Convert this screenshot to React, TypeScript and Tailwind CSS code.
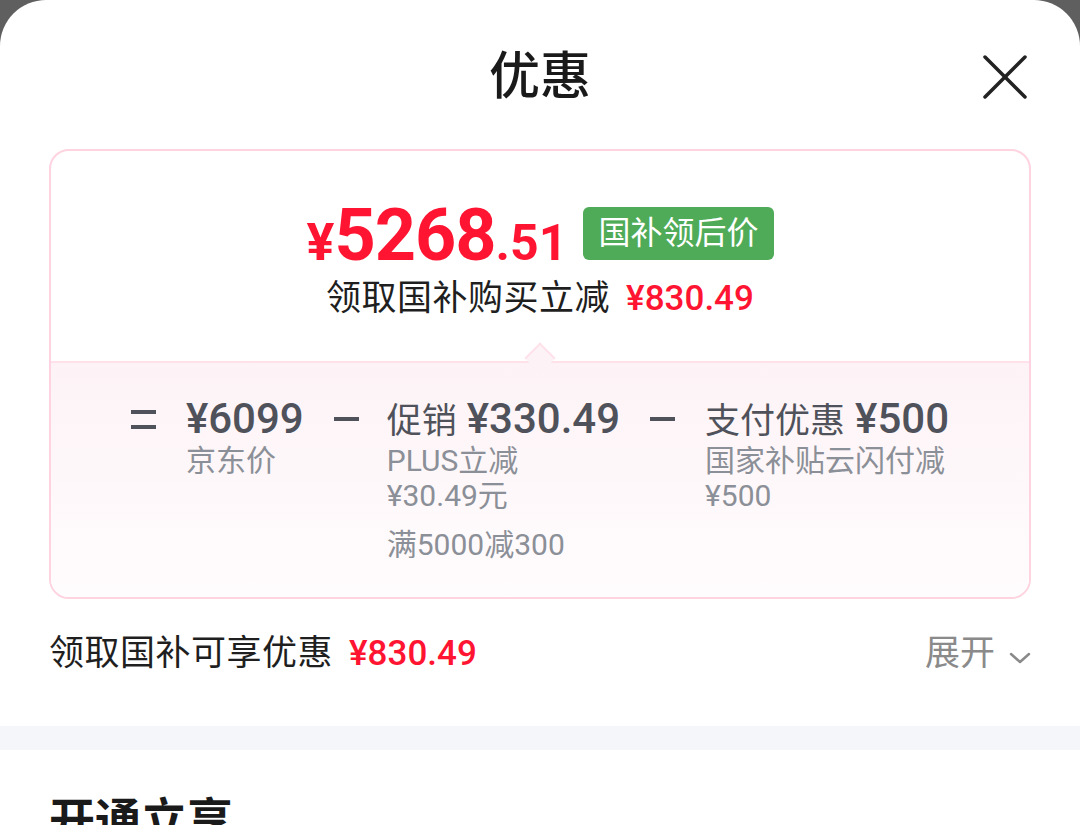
export default function App() {
  const font = { fontFamily: 'Roboto, "Noto Sans CJK SC", sans-serif' };

  return (
    <div className="h-[825px] w-[1080px] overflow-hidden bg-[#5f5f5f]" style={font}>
      <div className="h-full rounded-t-[46px] bg-white">
        {/* Header */}
        <div className="grid grid-cols-[1fr_auto_1fr] items-center pt-[46px]">
          <div />
          <h1 className="text-[51px] leading-[62px] font-medium text-[#1a1a1a]">优惠</h1>
          <div className="flex justify-end pr-[53px]">
            <svg width="44" height="44" viewBox="0 0 44 44" fill="none" stroke="#222" strokeWidth="3.5" strokeLinecap="round">
              <line x1="2" y1="2" x2="42" y2="42" />
              <line x1="42" y1="2" x2="2" y2="42" />
            </svg>
          </div>
        </div>

        {/* Price card */}
        <div className="mx-[49px] mt-[41px] overflow-hidden rounded-[20px] border-2 border-[#ffd3df]">
          <div className="flex flex-col items-center pt-[49px] pb-[40px]">
            <div className="flex items-center">
              <div className="flex items-baseline font-bold text-[#ff1431] leading-none">
                <span className="text-[52px]">¥</span>
                <span className="text-[72px] tracking-[-1px]">5268</span>
                <span className="text-[50px]">.51</span>
              </div>
              <div className="mb-[6px] ml-[16px] rounded-[6px] bg-[#4fab58] px-[15px] text-[32px] leading-[53px] text-white">
                国补领后价
              </div>
            </div>
            <div className="mt-[5px] flex items-center text-[35px] leading-[44px]">
              <span className="tracking-[0.5px] text-[#1f1f1f]">领取国补购买立减</span>
              <span className="ml-[16px] font-medium text-[#ff1431]">¥830.49</span>
            </div>
          </div>

          <div className="relative border-t-2 border-[#ffe1ea] bg-gradient-to-b from-[#fdf3f6] to-[#fffcfd] pt-[32px] pb-[35px]">
            <div className="absolute left-1/2 top-[-16px] -ml-[11px] h-[22px] w-[22px] rotate-45 border-t-2 border-l-2 border-[#ffe1ea] bg-[#fdf3f6]" />
            <div className="flex items-start justify-center text-[#4f525a]">
              <div className="flex h-[48px] w-[25px] flex-col justify-center gap-[11px]">
                <div className="h-[4px] w-[25px] bg-[#4f525a]" />
                <div className="h-[4px] w-[25px] bg-[#4f525a]" />
              </div>
              <div className="ml-[30px] flex flex-col">
                <div className="h-[48px] text-[42px] leading-[48px] font-medium">¥6099</div>
                <div className="text-[30px] leading-[35px] text-[#8b8f97]">京东价</div>
              </div>

              <div className="ml-[30px] flex h-[48px] w-[25px] items-center">
                <div className="h-[4px] w-[25px] bg-[#4f525a]" />
              </div>
              <div className="ml-[28px] flex flex-col">
                <div className="flex h-[48px] items-baseline leading-[48px]">
                  <span className="text-[35px]">促销</span>
                  <span className="ml-[10px] text-[42px] font-medium">¥330.49</span>
                </div>
                <div className="text-[30px] leading-[35px] text-[#8b8f97]">
                  PLUS立减
                  <br />
                  ¥30.49元
                </div>
                <div className="mt-[14px] text-[30px] leading-[35px] text-[#8b8f97]">满5000减300</div>
              </div>

              <div className="ml-[30px] flex h-[48px] w-[25px] items-center">
                <div className="h-[4px] w-[25px] bg-[#4f525a]" />
              </div>
              <div className="ml-[30px] flex flex-col">
                <div className="flex h-[48px] items-baseline leading-[48px]">
                  <span className="text-[35px]">支付优惠</span>
                  <span className="ml-[10px] text-[42px] font-medium">¥500</span>
                </div>
                <div className="text-[30px] leading-[35px] text-[#8b8f97]">
                  国家补贴云闪付减
                  <br />
                  ¥500
                </div>
              </div>
            </div>
          </div>
        </div>

        {/* Summary row */}
        <div className="mx-[49px] mt-[33px] mb-[50px] flex items-center justify-between text-[35px] leading-[44px]">
          <div className="flex items-center">
            <span className="tracking-[0.5px] text-[#1f1f1f]">领取国补可享优惠</span>
            <span className="ml-[16px] font-medium text-[#ff1431]">¥830.49</span>
          </div>
          <div className="flex items-center text-[#8a8a8a]">
            <span>展开</span>
            <svg className="ml-[14px] mt-[8px]" width="22" height="12" viewBox="0 0 22 12" fill="none" stroke="#8a8a8a" strokeWidth="2.5" strokeLinecap="round" strokeLinejoin="round">
              <polyline points="2,2 11,10 20,2" />
            </svg>
          </div>
        </div>

        <div className="h-[24px] bg-[#f5f6fa]" />

        <div className="px-[49px] pt-[40px]">
          <h2 className="text-[46px] leading-[60px] font-bold text-[#1a1a1a]">开通立享</h2>
        </div>
      </div>
    </div>
  );
}
